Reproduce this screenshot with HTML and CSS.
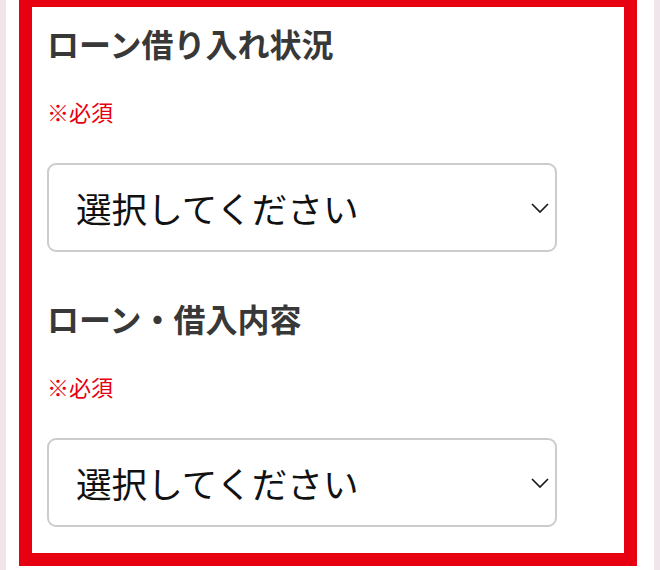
FILE: index.html
```html
<!DOCTYPE html>
<html lang="ja">
<head>
<meta charset="utf-8">
<link rel="stylesheet" href="styles.css">
</head>
<body>
<div class="page">
  <div class="frame">
    <div class="field">
      <h2 class="label">ローン借り入れ状況</h2>
      <p class="req">※必須</p>
      <div class="select-wrap">
        <select class="select">
          <option>選択してください</option>
        </select>
        <svg class="chev" width="18" height="10" viewBox="0 0 18 10"><polyline points="1,1 9,9 17,1" fill="none" stroke="#1a1a1a" stroke-width="1.7"/></svg>
      </div>
    </div>
    <div class="field">
      <h2 class="label">ローン・借入内容</h2>
      <p class="req">※必須</p>
      <div class="select-wrap">
        <select class="select">
          <option>選択してください</option>
        </select>
        <svg class="chev" width="18" height="10" viewBox="0 0 18 10"><polyline points="1,1 9,9 17,1" fill="none" stroke="#1a1a1a" stroke-width="1.7"/></svg>
      </div>
    </div>
  </div>
</div>
</body>
</html>
```
FILE: styles.css
```css
html, body {
  margin: 0;
  padding: 0;
}
body {
  background: #efe5ea;
  font-family: "Noto Sans CJK JP", "Noto Sans", sans-serif;
}
.page {
  background: #ffffff;
  margin: 0 6px;
  padding: 0 17px 4px 13px;
  height: 570px;
  box-sizing: border-box;
}
.frame {
  border: 13px solid #e60012;
  border-top-width: 7px;
  background: #ffffff;
  padding: 0 0 26px 15px;
}
.field {
  padding-top: 16px;
}
.field + .field {
  padding-top: 46px;
}
.label {
  margin: 0;
  font-size: 32px;
  line-height: 40px;
  font-weight: 700;
  color: #383838;
}
.req {
  margin: 33px 0 0;
  font-size: 22px;
  line-height: 30px;
  color: #e60012;
}
.select-wrap {
  position: relative;
  width: 510px;
  margin-top: 37px;
}
.select {
  appearance: none;
  -webkit-appearance: none;
  display: block;
  width: 100%;
  height: 89px;
  box-sizing: border-box;
  border: 2px solid #cccccc;
  border-radius: 9px;
  background: #ffffff;
  padding: 0 40px 0 27px;
  font-family: "Noto Sans CJK JP", "Noto Sans", sans-serif;
  font-size: 35.6px;
  color: #111111;
  outline: none;
}
.chev {
  position: absolute;
  right: 8px;
  top: 40px;
  pointer-events: none;
}
```
